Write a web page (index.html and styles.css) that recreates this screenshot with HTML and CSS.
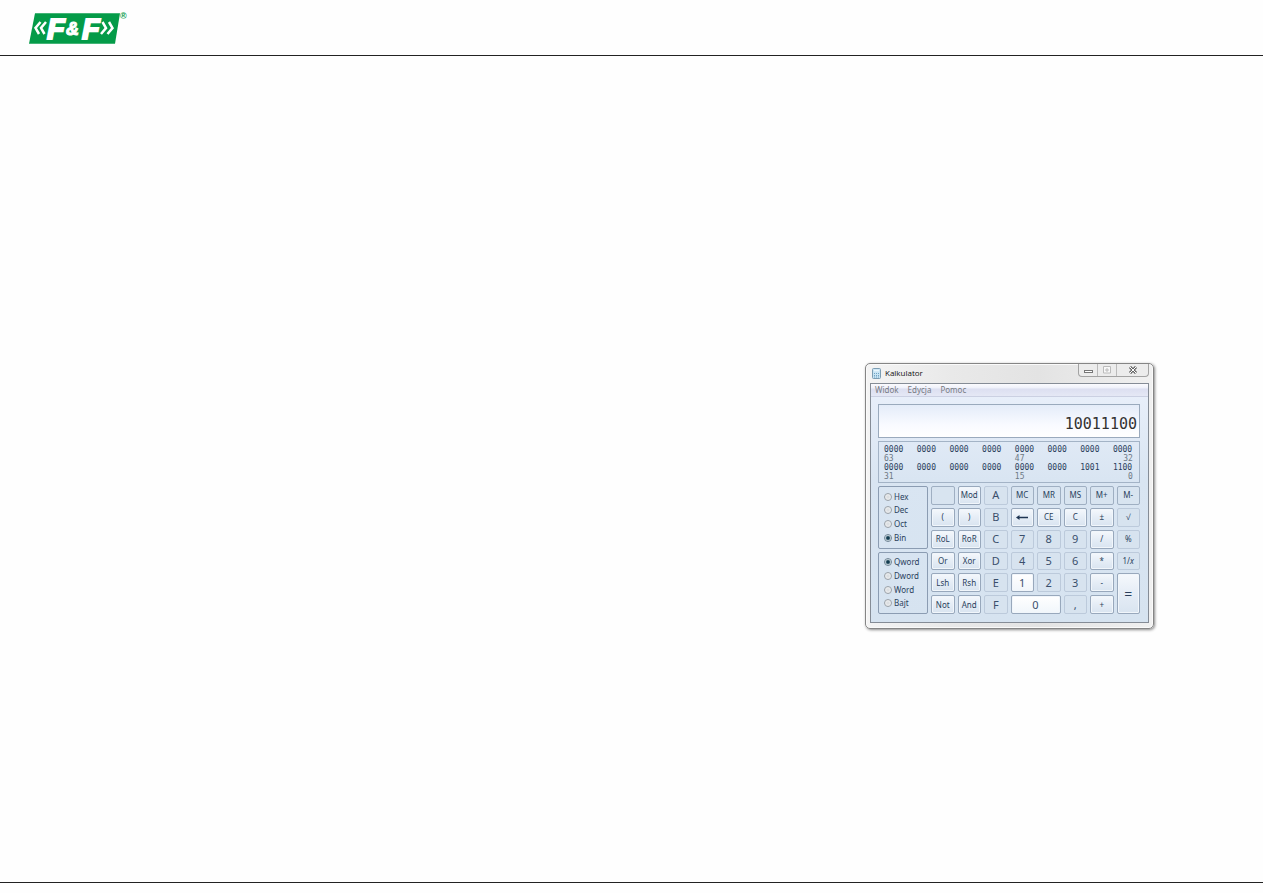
FILE: index.html
```html
<!DOCTYPE html>
<html lang="pl">
<head>
<meta charset="utf-8">
<meta name="viewport" content="width=device-width, initial-scale=1">
<title>Kalkulator</title>
<link rel="stylesheet" href="styles.css">
</head>
<body>
<header class="page-header">
  <svg class="logo" viewBox="0 0 100 34" role="img" aria-label="F&amp;F">
    <path class="logo-plate" d="M6 2.300H91L86 32.700H0Z"/>
    <path class="logo-arrow" d="M11.500 11L6.500 17L10 23M17 11L12 17L15.500 23"/>
    <path class="logo-arrow" d="M73.500 11L77 17L72 23M80 11L83.500 17L78.500 23"/>
    <text class="logo-letter" x="18" y="28">F</text>
    <text class="logo-amp" x="37" y="24">&amp;</text>
    <text class="logo-letter" x="53" y="28">F</text>
    <text class="logo-mark" x="91" y="8">®</text>
  </svg>
</header>
<main class="page-main">
  <section class="window">
    <div class="titlebar">
      <svg class="app-icon" viewBox="0 0 9 11" aria-hidden="true">
        <rect x=".5" y=".5" width="8" height="10" rx="1" fill="#c9e4f3" stroke="#7c9db3"/>
        <path d="M2 2.500H7" stroke="#e9f6fc" stroke-width="1.500"/>
        <path d="M2 5.500H7M2 7.500H7M2 9H7" stroke="#6fa3c4" stroke-dasharray="1 1"/>
      </svg>
      <h1 class="title">Kalkulator</h1>
      <div class="caption">
        <button class="cap" aria-label="Minimalizuj"><svg viewBox="0 0 10 8"><rect x="1.500" y="4.500" width="8" height="2" fill="#fff" stroke="#777"/></svg></button>
        <button class="cap" aria-label="Maksymalizuj" disabled><svg viewBox="0 0 10 8"><path d="M1.500 .5H8.500V7H1.500ZM4 3H6V5H4Z" fill="#f8f8f8" stroke="#bbb"/></svg></button>
        <button class="cap cap-close" aria-label="Zamknij"><svg viewBox="0 0 10 8"><path d="M2 1L8 7M8 1L2 7" stroke="#666" stroke-width="3"/><path d="M2 1L8 7M8 1L2 7" stroke="#fff"/></svg></button>
      </div>
    </div>
    <div class="client">
      <nav class="menu"><button>Widok</button><button>Edycja</button><button>Pomoc</button></nav>
      <div class="body">
        <output class="display">10011100</output>
        <div class="bits">
          <div class="bit-row"><span>0000</span><span>0000</span><span>0000</span><span>0000</span><span>0000</span><span>0000</span><span>0000</span><span>0000</span></div>
          <div class="bit-row index"><span>63</span><span></span><span></span><span></span><span>47</span><span></span><span></span><span class="end">32</span></div>
          <div class="bit-row"><span>0000</span><span>0000</span><span>0000</span><span>0000</span><span>0000</span><span>0000</span><span>1001</span><span>1100</span></div>
          <div class="bit-row index"><span>31</span><span></span><span></span><span></span><span>15</span><span></span><span></span><span class="end">0</span></div>
        </div>
        <div class="controls">
          <div class="modes">
            <div class="panel" role="radiogroup">
              <label><input type="radio" name="base">Hex</label>
              <label><input type="radio" name="base">Dec</label>
              <label><input type="radio" name="base">Oct</label>
              <label><input type="radio" name="base" checked>Bin</label>
            </div>
            <div class="panel" role="radiogroup">
              <label><input type="radio" name="word" checked>Qword</label>
              <label><input type="radio" name="word">Dword</label>
              <label><input type="radio" name="word">Word</label>
              <label><input type="radio" name="word">Bajt</label>
            </div>
          </div>
          <div class="keys">
            <button class="key flat" disabled></button><button class="key">Mod</button><button class="key big off" disabled>A</button><button class="key flat">MC</button><button class="key flat">MR</button><button class="key flat">MS</button><button class="key flat">M+</button><button class="key flat">M-</button>
            <button class="key">(</button><button class="key">)</button><button class="key big off" disabled>B</button><button class="key" aria-label="Cofnij"><svg class="arrow" viewBox="0 0 12 7"><path d="M0 3.500L3.500 1V2.800H12V4.200H3.500V6Z"/></svg></button><button class="key">CE</button><button class="key">C</button><button class="key">±</button><button class="key off" disabled>√</button>
            <button class="key">RoL</button><button class="key">RoR</button><button class="key big off" disabled>C</button><button class="key big off" disabled>7</button><button class="key big off" disabled>8</button><button class="key big off" disabled>9</button><button class="key">/</button><button class="key off" disabled>%</button>
            <button class="key">Or</button><button class="key">Xor</button><button class="key big off" disabled>D</button><button class="key big off" disabled>4</button><button class="key big off" disabled>5</button><button class="key big off" disabled>6</button><button class="key">*</button><button class="key off" disabled>1/<i>x</i></button>
            <button class="key">Lsh</button><button class="key">Rsh</button><button class="key big off" disabled>E</button><button class="key big lit">1</button><button class="key big off" disabled>2</button><button class="key big off" disabled>3</button><button class="key">-</button><button class="key equals">=</button>
            <button class="key">Not</button><button class="key">And</button><button class="key big off" disabled>F</button><button class="key big lit zero">0</button><button class="key big off" disabled>,</button><button class="key">+</button>
          </div>
        </div>
      </div>
    </div>
  </section>
</main>
<footer class="page-footer"></footer>
</body>
</html>
```
FILE: styles.css
```css
* { box-sizing: border-box; }
body {
  margin: 0;
  min-height: 100vh;
  display: flex;
  flex-direction: column;
  background: #fefefe;
  font: 8px/10px "Noto Sans", "Open Sans", sans-serif;
  color: #2a3f5c;
}
button { font: inherit; color: inherit; padding: 0; margin: 0; }
.page-header { border-bottom: 1px solid #222; padding: 11px 29px 10px; }
.logo { display: block; width: 100px; height: 34px; }
.logo-plate { fill: #049b48; }
.logo-arrow { fill: none; stroke: #fff; stroke-width: 2.5px; }
.logo-letter, .logo-amp {
  font: italic bold 29px "Liberation Sans", Arial, sans-serif;
  fill: #fff;
  stroke: #fff;
  stroke-width: 2px;
}
.logo-amp { font-size: 18px; stroke-width: 1px; }
.logo-mark { font: bold 9px "Liberation Sans", Arial, sans-serif; fill: #049b48; }
.page-main {
  flex: 1;
  display: flex;
  justify-content: flex-end;
  align-items: flex-start;
  padding: 307px 109px 0 0;
}
.page-footer { border-top: 1px solid #222; height: 11px; }

.window {
  width: 289px;
  border: 1px solid #858585;
  border-radius: 5px;
  padding: 0 4px 5px;
  background: linear-gradient(90deg, #f4f4f4, #e9e9e9 30%, #e3e3e3 60%, #f0f0f0);
  box-shadow: inset 0 0 0 1px #fafafa, 1px 1px 3px #888;
}
.titlebar { display: flex; align-items: flex-start; height: 19px; }
.app-icon { width: 9px; height: 11px; margin: 4px 4px 0 2px; }
.title {
  flex: 1;
  margin: 3px 0 0;
  font: 8px/11px "Open Sans", "Noto Sans", sans-serif;
  color: #111;
}
.caption {
  display: flex;
  height: 13px;
  border: 1px solid #a3a3a3;
  border-top: 0;
  border-radius: 0 0 4px 4px;
  background: #ececec;
}
.cap { width: 19px; border: 0; border-right: 1px solid #bbb; background: none; display: grid; place-items: center; }
.cap svg { width: 10px; height: 8px; }
.cap-close { width: 31px; border-right: 0; }
.client {
  border: 1px solid #858c96;
  background: linear-gradient(#eaf0fb, #d9e5f2 40%, #d6e3f0);
}
.menu {
  display: flex;
  gap: 9px;
  height: 13px;
  padding: 0 4px;
  background: linear-gradient(#fbfbfe, #eef0fa 35%, #dcdff1 40%, #e5e8f5);
  border-bottom: 1px solid #cbd0e2;
  color: #777b82;
}
.menu button { border: 0; background: none; }
.body { padding: 7px 8px 8px 7px; display: grid; gap: 3px; }
.display {
  display: block;
  height: 34px;
  border: 1px solid #9aaabd;
  background: linear-gradient(#e4ecf9, #f8faff 60%, #fff);
  padding: 9px 2px 0;
  text-align: right;
  font: 15px/20px "DejaVu Sans Mono", monospace;
  color: #333;
}
.bits {
  border: 1px solid #a3b3c6;
  padding: 3px 6px 1px 5px;
  font: 8px/9px "DejaVu Sans Mono", monospace;
}
.bit-row { display: flex; justify-content: space-between; }
.bit-row span { width: 20px; }
.index { color: #6e7884; }
.bit-row .end { text-align: right; }
.controls { display: grid; grid-template-columns: 50px 1fr; gap: 3px; height: 128px; }
.modes { display: grid; grid-template-rows: 1fr 1fr; gap: 3px; }
.panel {
  border: 1px solid #8b9cb2;
  border-radius: 2px;
  padding: 3px 0 3px 5px;
  display: flex;
  flex-direction: column;
  justify-content: space-between;
}
.panel label { display: flex; align-items: center; gap: 2px; height: 13px; }
.panel input {
  appearance: none;
  flex: none;
  width: 8px;
  height: 8px;
  margin: 0;
  border: 1px solid #9aa1a8;
  border-radius: 50%;
  background: radial-gradient(#d5d9dd, #fafafa);
}
.panel input:checked { border-color: #708494; background: radial-gradient(#123c50 0 30%, #dce8ee 65%); }
.keys {
  display: grid;
  grid-template-columns: repeat(8, minmax(0, 1fr));
  grid-template-rows: repeat(6, minmax(0, 1fr));
  gap: 3px;
}
.key {
  display: flex;
  align-items: center;
  justify-content: center;
  min-width: 0;
  border: 1px solid #98a8bc;
  border-radius: 2px;
  background: linear-gradient(#f5f8fc, #e5edf6 50%, #d9e4f0);
  box-shadow: inset 0 0 0 1px #f1f6fb;
}
.flat { background: #d8e4f0; box-shadow: none; border-color: #9fafc2; }
.off { background: #d7e3ef; box-shadow: none; border-color: #bccadb; }
.big { font-size: 11px; color: #3a4f6c; }
.lit { background: linear-gradient(#fff, #f1f6fb); }
.zero { grid-column: span 2; }
.equals { grid-row: 5 / span 2; grid-column: 8; font-size: 14px; }
.arrow { width: 12px; height: 7px; fill: #1f3552; }
```
